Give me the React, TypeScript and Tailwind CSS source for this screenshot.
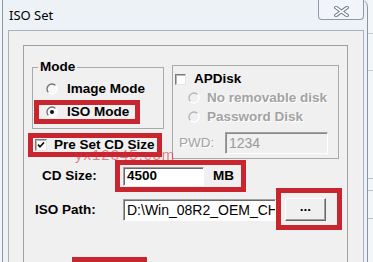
import React from 'react';

const RED = 'outline-[5px] outline-solid outline-[#c8252f]';

function Radio({ checked = false, disabled = false }: { checked?: boolean; disabled?: boolean }) {
  return (
    <svg width="12" height="12" viewBox="0 0 12 12" className="shrink-0">
      <circle cx="6" cy="6" r="5" fill={disabled ? '#f0f0f0' : '#f8f8f8'} />
      <path d="M2.46 9.54 A5 5 0 0 1 9.54 2.46" fill="none" stroke={disabled ? '#b4b4b4' : '#707070'} strokeWidth="1.3" />
      <path d="M9.54 2.46 A5 5 0 0 1 2.46 9.54" fill="none" stroke="#ffffff" strokeWidth="1.3" />
      {checked && <circle cx="6" cy="6" r="2" fill="#111" />}
    </svg>
  );
}

function Checkbox({ checked = false, size = 12 }: { checked?: boolean; size?: number }) {
  return (
    <div
      className="shrink-0 bg-white border border-t-[#7c7c7c] border-l-[#7c7c7c] border-b-[#e4e4e4] border-r-[#e4e4e4] shadow-[inset_1px_1px_0_#b8b8b8] flex items-center justify-center"
      style={{ width: size, height: size }}
    >
      {checked && (
        <svg width="8" height="8" viewBox="0 0 8 8">
          <path d="M1 3.6 L3 5.8 L7 1.4" fill="none" stroke="#111" strokeWidth="1.6" />
        </svg>
      )}
    </div>
  );
}

export default function App() {
  return (
    <div className="w-[373px] h-[262px] overflow-hidden flex bg-[#e8eef4] font-['Liberation_Sans',Arial,sans-serif]">
      <div className="w-[2px] shrink-0 bg-[#f2f5f8]" />

      {/* Window */}
      <div className="w-[366px] h-[300px] shrink-0 flex flex-col pl-[5px] pr-[3px] bg-[#edf2f7] border-l border-r border-[#8995a2] rounded-tr-[7px]">
        {/* Title bar */}
        <div className="h-[30px] flex items-start justify-between">
          <span className="ml-[1px] mt-[7px] text-[13px] leading-[16px] text-black font-['Noto_Sans',sans-serif]">ISO Set</span>
          <div className="w-[46px] h-[20px] flex items-center justify-center border-x border-b border-[#8e99a5] rounded-b-[4px] bg-[#f1f4f8]">
            <svg width="15" height="11" viewBox="0 0 15 11" className="mt-[3px]">
              <path d="M2 1.5 L13 9.5 M13 1.5 L2 9.5" stroke="#6f7a86" strokeWidth="3.6" strokeLinecap="square" />
              <path d="M2 1.5 L13 9.5 M13 1.5 L2 9.5" stroke="#ffffff" strokeWidth="1.6" strokeLinecap="square" />
            </svg>
          </div>
        </div>

        {/* Client area */}
        <div className="h-[270px] bg-[#f0f0f0] border border-[#a9b2bc] pt-[14px] pl-[14px]">
          <div className="relative w-[325px] h-[250px] border border-[#a0a0a0] pl-[8px] text-[13.5px] leading-[16px] text-black">
            <div className="flex items-start gap-[8px]">
              {/* Left column */}
              <div className="w-[132px] flex flex-col">
                <fieldset className="mt-[13px] w-[132px] border border-[#a9a9a9] pb-[9px]">
                  <legend className="ml-[5px] px-[2px] font-bold">Mode</legend>
                  <div className="mt-[6px] h-[16px] pl-[13px] flex items-center gap-[9px] font-bold">
                    <Radio />
                    <span>Image Mode</span>
                  </div>
                  <div className={`mt-[8px] ml-[6px] w-[96px] h-[14px] pl-[7px] flex items-center gap-[9px] font-bold ${RED}`}>
                    <Radio checked />
                    <span>ISO Mode</span>
                  </div>
                </fieldset>
                <div className={`mt-[9px] ml-[1px] w-[124px] h-[14px] pl-[2px] flex items-center gap-[7px] font-bold whitespace-nowrap ${RED}`}>
                  <Checkbox checked />
                  <span>Pre Set CD Size</span>
                </div>
              </div>

              {/* APDisk group */}
              <div className="mt-[19px] w-[167px] border border-[#a9a9a9] flex flex-col pt-[6px] pb-[4px]">
                <div className="h-[14px] pl-[2px] flex items-center gap-[8px] font-bold">
                  <Checkbox size={11} />
                  <span>APDisk</span>
                </div>
                <div className="mt-[4px] h-[16px] pl-[15px] flex items-center gap-[7px] font-bold text-[#a3a3a3] [text-shadow:1px_1px_0_#ffffff]">
                  <Radio disabled />
                  <span>No removable disk</span>
                </div>
                <div className="mt-[3px] h-[16px] pl-[15px] flex items-center gap-[7px] font-bold text-[#a3a3a3] [text-shadow:1px_1px_0_#ffffff]">
                  <Radio disabled />
                  <span>Password Disk</span>
                </div>
                <div className="mt-[7px] h-[22px] pl-[6px] flex items-center">
                  <span className="w-[46px] text-[#a3a3a3] [text-shadow:1px_1px_0_#ffffff]">PWD:</span>
                  <div className="w-[103px] h-[22px] pl-[3px] flex items-center bg-[#f0f0f0] border border-t-[#a0a0a0] border-l-[#a0a0a0] border-b-white border-r-white shadow-[inset_1px_1px_0_#8a8a8a] text-[14px] text-[#9a9a9a]">
                    1234
                  </div>
                </div>
              </div>
            </div>

            {/* CD Size */}
            <div className="mt-[6px] h-[22px] pl-[10px] flex items-center font-bold">
              <span className="w-[78px]">CD Size:</span>
              <div className={`w-[121px] h-[22px] pl-[3px] flex items-center ${RED}`}>
                <div className="w-[81px] h-[19px] pl-[3px] flex items-center bg-white border border-t-[#a0a0a0] border-l-[#a0a0a0] border-b-white border-r-white shadow-[inset_1px_1px_0_#6a6a6a]">
                  4500
                </div>
                <span className="ml-[9px]">MB</span>
              </div>
            </div>

            {/* ISO Path */}
            <div className="mt-[6px] h-[32px] pl-[3px] flex items-start">
              <span className="mt-[6px] w-[88px] h-[22px] flex items-center font-bold">ISO Path:</span>
              <div className="mt-[6px] w-[153px] h-[22px] pl-[3px] flex items-center overflow-hidden whitespace-nowrap bg-white border border-t-[#a0a0a0] border-l-[#a0a0a0] border-b-white border-r-white shadow-[inset_1px_1px_0_#6a6a6a] text-[14px]">
                D:\Win_08R2_OEM_CH
              </div>
              <div className={`ml-[5px] w-[56px] h-[32px] pl-[4px] flex items-center ${RED}`}>
                <button className="w-[41px] h-[23px] flex items-center justify-center bg-[#f0f0f0] border border-t-white border-l-white border-b-[#696969] border-r-[#696969] shadow-[inset_-1px_-1px_0_#a0a0a0] font-bold leading-none pb-[4px]">
                  ...
                </button>
              </div>
            </div>

            {/* OK button annotation (cut off) */}
            <div className="mt-[32px] ml-[40px] w-[75px] h-[24px] border-[5px] border-[#c8252f]" />

            {/* Watermark */}
            <span className="absolute left-[51px] top-[100px] text-[15px] leading-[17px] tracking-[1px] text-[rgba(214,48,64,0.6)] pointer-events-none">
              yx12345.com
            </span>
          </div>
        </div>
      </div>

      {/* Desktop behind */}
      <div className="flex-1 flex flex-col bg-[#f3f6f9]">
        <div className="h-[33px]" />
        <div className="h-px bg-[#c4ccd4]" />
        <div className="h-[36px]" />
        <div className="h-px bg-[#c4ccd4]" />
        <div className="h-[107px]" />
        <div className="h-px bg-[#b8c0c8]" />
        <div className="h-[11px]" />
        <div className="h-px bg-[#b8c0c8]" />
        <div className="h-[27px]" />
        <div className="h-px bg-[#b8c0c8]" />
      </div>
    </div>
  );
}
